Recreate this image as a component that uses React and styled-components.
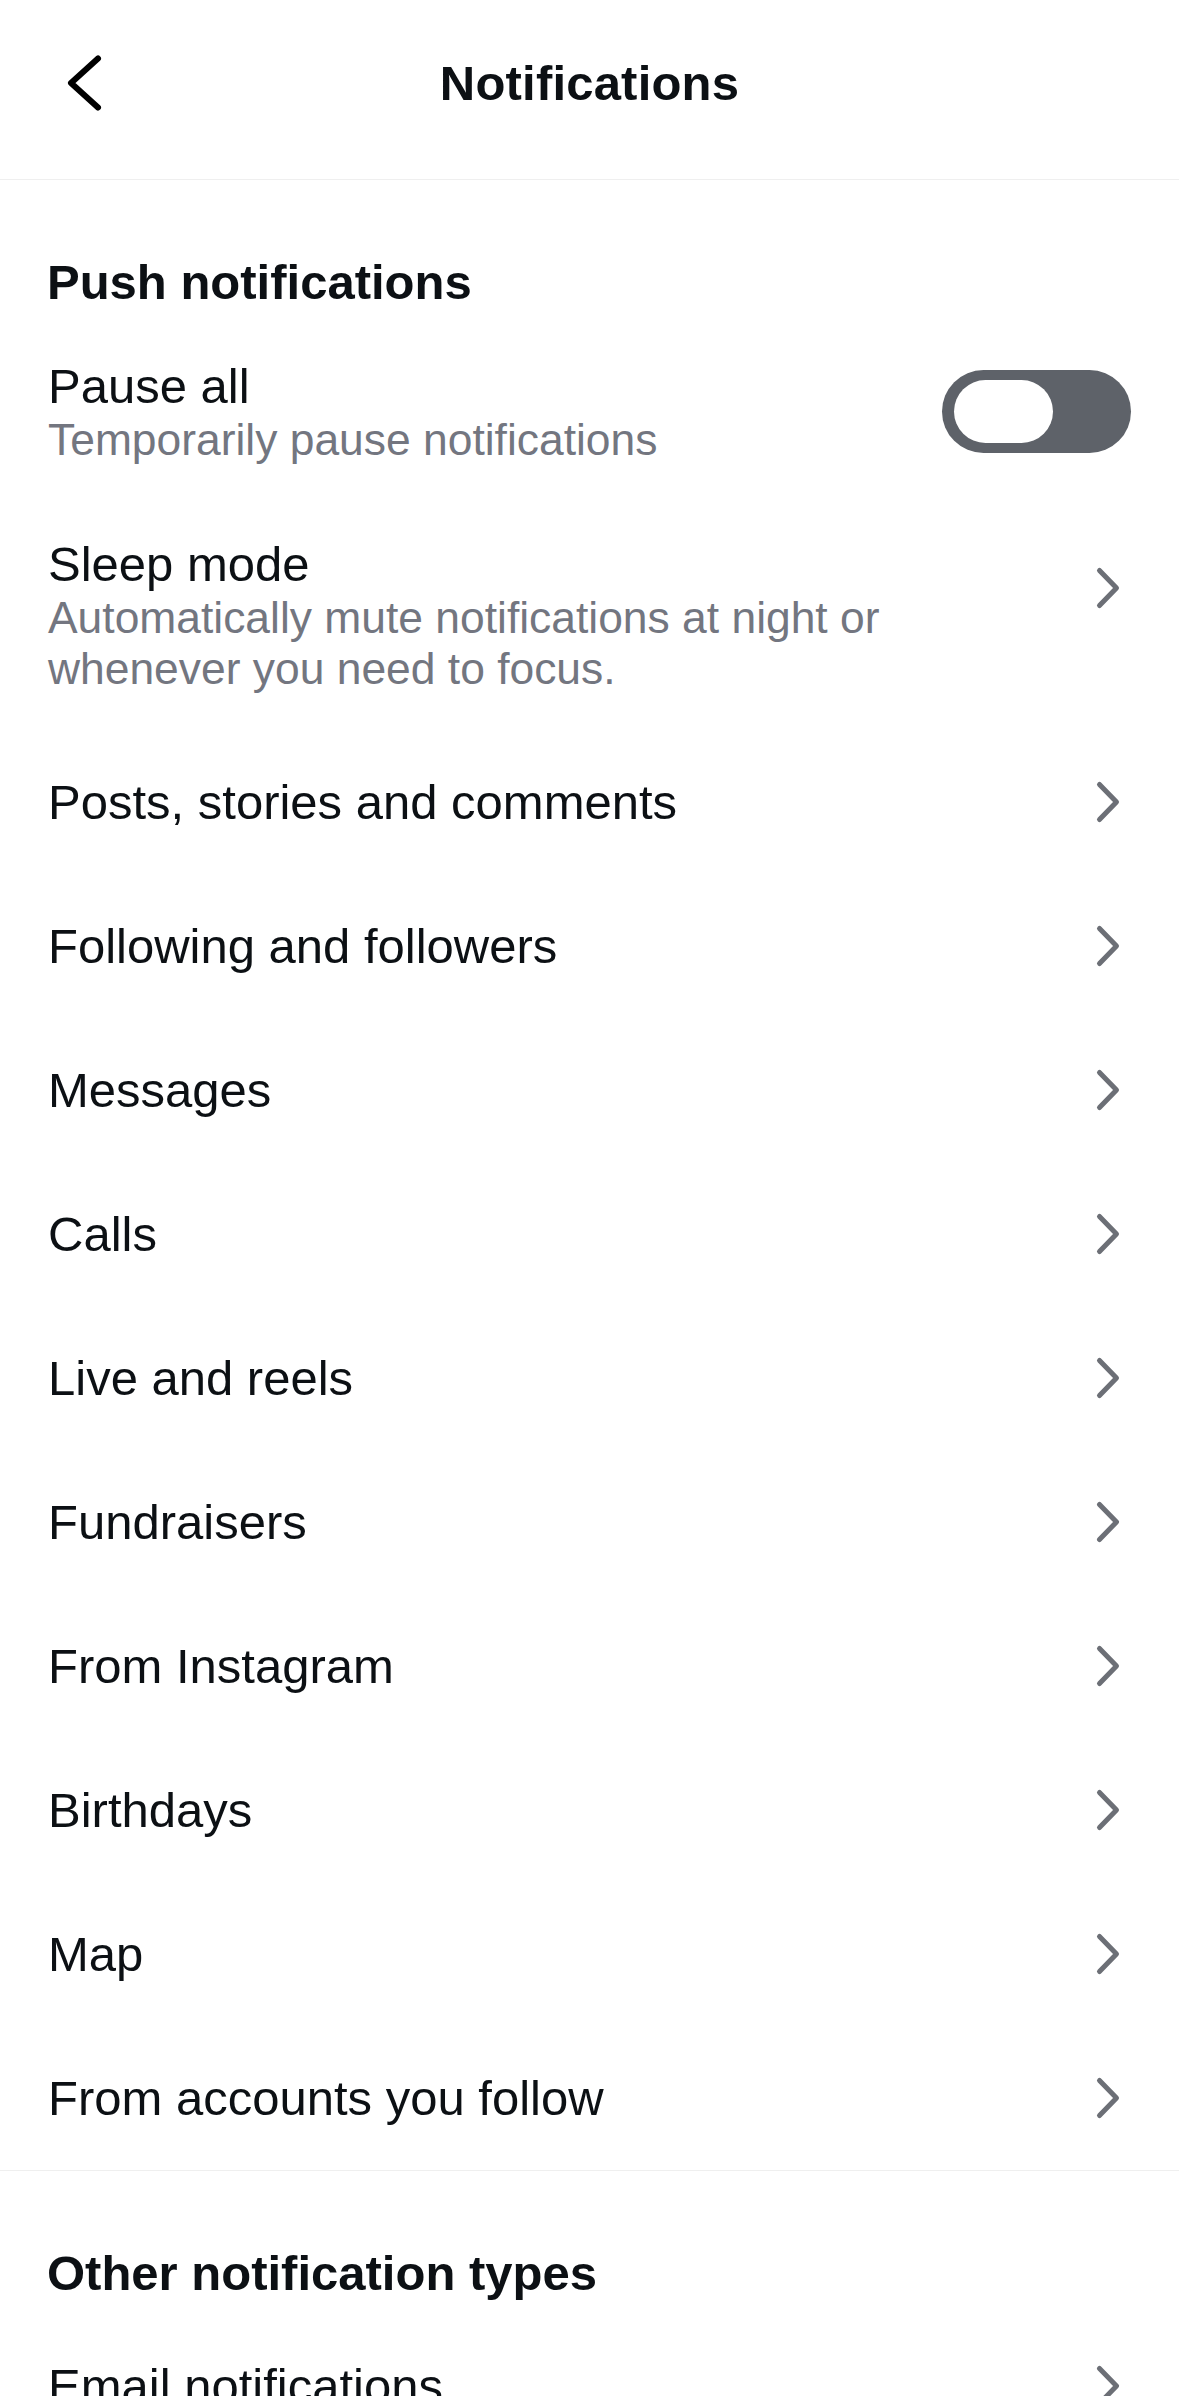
import React from "react";
import styled, { createGlobalStyle } from "styled-components";

const GlobalStyle = createGlobalStyle`
  html, body {
    margin: 0;
    padding: 0;
    background: #ffffff;
  }
  body {
    font-family: "Liberation Sans", Arial, "Helvetica Neue", sans-serif;
    color: #0c1014;
    -webkit-font-smoothing: antialiased;
  }
`;

const Screen = styled.div`
  width: 1179px;
  height: 2396px;
  overflow: hidden;
  background: #ffffff;
  display: flex;
  flex-direction: column;
`;

const Header = styled.header`
  height: 180px;
  box-sizing: border-box;
  padding-bottom: 14px;
  border-bottom: 1px solid #efefef;
  display: grid;
  grid-template-columns: 1fr auto 1fr;
  align-items: center;
  flex-shrink: 0;
`;

const BackButton = styled.button`
  justify-self: start;
  margin-left: 65px;
  padding: 0;
  border: 0;
  background: none;
  display: flex;
  align-items: center;
  cursor: pointer;
`;

const Title = styled.h1`
  margin: 0;
  font-size: 49px;
  line-height: 58px;
  font-weight: 700;
  color: #0c1014;
  letter-spacing: 0.2px;
`;

const Section = styled.section`
  padding-top: 73px;
  border-bottom: ${(p) => (p.$divider ? "1px solid #efefef" : "none")};
  flex-shrink: 0;
`;

const SectionHeading = styled.h2`
  margin: 0 0 12px;
  padding: 0 48px 0 47px;
  font-size: 49px;
  line-height: 58px;
  font-weight: 700;
  color: #0c1014;
`;

const Row = styled.div`
  display: flex;
  align-items: ${(p) => (p.$alignTop ? "flex-start" : "center")};
  gap: 24px;
  box-sizing: border-box;
  min-height: ${(p) => (p.$detailed ? "0" : "144px")};
  padding: ${(p) => (p.$detailed ? "35px 48px 36px 48px" : "0 48px")};
  cursor: pointer;
`;

const TextBlock = styled.div`
  flex: 1;
  min-width: 0;
  display: flex;
  flex-direction: column;
`;

const Label = styled.span`
  font-size: 49px;
  line-height: 56px;
  font-weight: 400;
  color: #0c1014;
`;

const Description = styled.span`
  max-width: 890px;
  font-size: 44.4px;
  line-height: 51px;
  color: #737680;
`;

const ChevronWrap = styled.span`
  flex-shrink: 0;
  display: flex;
  margin-right: 10px;
  margin-top: ${(p) => (p.$offset ? `${p.$offset}px` : "0")};
`;

const Toggle = styled.div`
  flex-shrink: 0;
  width: 189px;
  height: 83px;
  box-sizing: border-box;
  padding: 10px 12px;
  border-radius: 42px;
  background: #5e6269;
  display: flex;
  align-items: center;
  justify-content: flex-start;
`;

const Knob = styled.span`
  width: 99px;
  height: 63px;
  border-radius: 32px;
  background: #ffffff;
`;

const BackIcon = () => (
  <svg width="40" height="62" viewBox="0 0 40 62" fill="none">
    <path
      d="M33 6.5 L6 31 L33 55.5"
      stroke="#000000"
      strokeWidth="6"
      strokeLinecap="round"
      strokeLinejoin="round"
    />
  </svg>
);

const ChevronIcon = () => (
  <svg width="26" height="44" viewBox="0 0 26 44" fill="none">
    <path
      d="M4.5 4.5 L21.5 22 L4.5 39.5"
      stroke="#6c6f76"
      strokeWidth="5"
      strokeLinecap="round"
      strokeLinejoin="round"
    />
  </svg>
);

const pushItems = [
  "Posts, stories and comments",
  "Following and followers",
  "Messages",
  "Calls",
  "Live and reels",
  "Fundraisers",
  "From Instagram",
  "Birthdays",
  "Map",
  "From accounts you follow",
];

const otherItems = ["Email notifications"];

const LinkRow = ({ label }) => (
  <Row>
    <TextBlock>
      <Label>{label}</Label>
    </TextBlock>
    <ChevronWrap>
      <ChevronIcon />
    </ChevronWrap>
  </Row>
);

export default function App() {
  return (
    <>
      <GlobalStyle />
      <Screen>
        <Header>
          <BackButton aria-label="Back">
            <BackIcon />
          </BackButton>
          <Title>Notifications</Title>
          <span />
        </Header>

        <Section $divider>
          <SectionHeading>Push notifications</SectionHeading>

          <Row $detailed>
            <TextBlock>
              <Label>Pause all</Label>
              <Description>Temporarily pause notifications</Description>
            </TextBlock>
            <Toggle role="switch" aria-checked="false">
              <Knob />
            </Toggle>
          </Row>

          <Row $detailed $alignTop>
            <TextBlock>
              <Label>Sleep mode</Label>
              <Description>
                Automatically mute notifications at night or whenever you need
                to focus.
              </Description>
            </TextBlock>
            <ChevronWrap $offset={30}>
              <ChevronIcon />
            </ChevronWrap>
          </Row>

          {pushItems.map((item) => (
            <LinkRow key={item} label={item} />
          ))}
        </Section>

        <Section>
          <SectionHeading>Other notification types</SectionHeading>
          {otherItems.map((item) => (
            <LinkRow key={item} label={item} />
          ))}
        </Section>
      </Screen>
    </>
  );
}
